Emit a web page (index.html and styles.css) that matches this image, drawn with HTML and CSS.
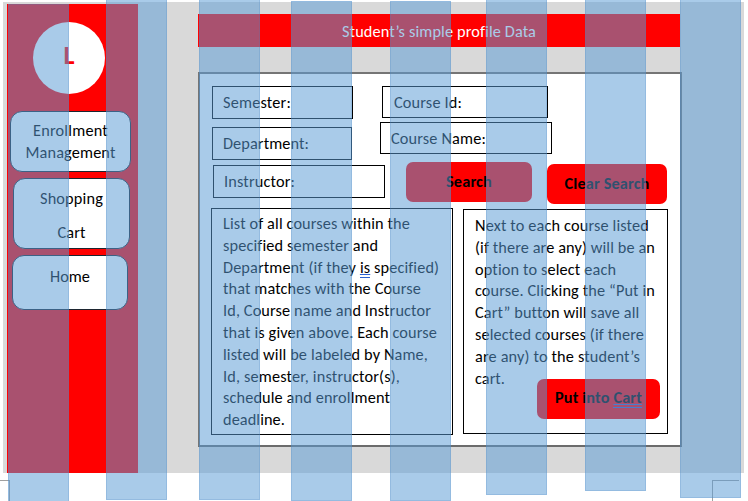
FILE: index.html
```html
<!DOCTYPE html>
<html lang="en">
<head>
<meta charset="utf-8">
<title>Student's simple profile Data</title>
<link rel="stylesheet" href="styles.css">
</head>
<body>
<div class="page">
  <div class="app">
    <nav class="sidebar">
      <div class="avatar"><span>L</span></div>
      <div class="nav-btn enroll"><span class="t" data-w="75">Enrollment</span><span class="t" data-w="90">Management</span></div>
      <div class="nav-btn shop"><span class="t" data-w="63">Shopping</span><span class="t" data-w="28">Cart</span></div>
      <div class="nav-btn home"><span class="t" data-w="40">Home</span></div>
    </nav>
    <main class="main">
      <header class="title"><span class="t" data-w="194">Student’s simple profile Data</span></header>
      <section class="panel">
        <div class="form">
          <div class="col-left">
            <div class="field semester"><span class="t" data-w="68">Semester:</span></div>
            <div class="field department"><span class="t" data-w="86">Department:</span></div>
            <div class="field instructor"><span class="t" data-w="71">Instructor:</span></div>
          </div>
          <div class="col-right">
            <div class="field course-id"><span class="t" data-w="68">Course Id:</span></div>
            <div class="field course-name"><span class="t" data-w="95">Course Name:</span></div>
            <div class="actions">
              <div class="btn search"><span class="t" data-w="46">Search</span></div>
              <div class="btn clear"><span class="t" data-w="85">Clear Search</span></div>
            </div>
          </div>
        </div>
        <div class="notes">
          <div class="note list">
            <span class="t" data-w="187">List of all courses within the</span>
            <span class="t" data-w="155">specified semester and</span>
            <span class="t" data-w="216">Department (if they <u>is</u> specified)</span>
            <span class="t" data-w="198">that matches with the Course</span>
            <span class="t" data-w="208">Id, Course name and Instructor</span>
            <span class="t" data-w="214">that is given above. Each course</span>
            <span class="t" data-w="205">listed will be labeled by Name,</span>
            <span class="t" data-w="177">Id, semester, instructor(s),</span>
            <span class="t" data-w="167">schedule and enrollment</span>
            <span class="t" data-w="62">deadline.</span>
          </div>
          <div class="note cart">
            <span class="t" data-w="174">Next to each course listed</span>
            <span class="t" data-w="180">(if there are any) will be an</span>
            <span class="t" data-w="141">option to select each</span>
            <span class="t" data-w="180">course. Clicking the “Put in</span>
            <span class="t" data-w="164">Cart” button will save all</span>
            <span class="t" data-w="169">selected courses (if there</span>
            <span class="t" data-w="165">are any) to the student’s</span>
            <span class="t" data-w="30">cart.</span>
            <div class="btn put"><span class="t" data-w="87">Put into <u>Cart</u></span></div>
          </div>
        </div>
      </section>
    </main>
  </div>
  <div class="corner corner-left"></div>
  <div class="corner corner-right"></div>
  <div class="stripe s1"></div>
  <div class="stripe s2"></div>
  <div class="stripe s3"></div>
  <div class="stripe s4"></div>
  <div class="stripe s5"></div>
  <div class="stripe s6"></div>
  <div class="stripe s7"></div>
  <div class="stripe s8"></div>
</div>
<script src="fit.js"></script>
</body>
</html>
```
FILE: styles.css
```css
* { box-sizing: border-box; }
body { margin: 0; background: #fff; color: #000; font: 16.3px/22px Carlito, Calibri, Lato, sans-serif; }
.page { position: relative; width: 748px; height: 501px; overflow: hidden; padding: 2px 0 0 3px; }
.app { display: flex; width: 741px; height: 471px; background: #d9d9d9; padding: 2px 0 0 4px; }
.t { display: block; width: max-content; white-space: pre; }

.sidebar { width: 131px; height: 469px; background: #f00; padding-top: 18px; }
.avatar { width: 72px; height: 72px; margin-left: 26px; border-radius: 50%; background: #fff; color: #f00; font: bold 26px/67px Carlito, Calibri, Lato, sans-serif; text-align: center; }
.nav-btn { display: flex; flex-direction: column; align-items: center; background: #fff; border: 1px solid #1c2530; border-radius: 12px; }
.enroll { width: 121px; height: 61px; margin: 17px 0 0 3px; padding-top: 7px; }
.shop { width: 117px; height: 71px; margin: 6px 0 0 6px; padding-top: 8px; gap: 12px; }
.home { width: 116px; height: 55px; margin: 6px 0 0 5px; padding-top: 9px; }

.main { margin-left: 60px; padding-top: 10px; }
.title { display: flex; justify-content: center; width: 482px; height: 33px; background: #f00; color: #fff; padding-top: 6px; }
.panel { width: 484px; height: 375px; margin-top: 25px; background: #fff; border: 2px solid #757575; border-bottom-color: #6b6b6b; }
.form { display: flex; height: 134px; padding: 12px 0 0 12px; }
.col-left { width: 168px; }
.field { border: 1px solid #000; padding: 4px 0 0 10px; white-space: nowrap; }
.semester { width: 141px; height: 33px; }
.department { width: 140px; height: 33px; margin-top: 8px; }
.instructor { width: 172px; height: 33px; margin: 5px 0 0 1px; }
.course-id { width: 166px; height: 32px; margin-left: 2px; padding-left: 11px; }
.course-name { width: 172px; height: 32px; margin-top: 4px; }
.actions { display: flex; gap: 15px; margin: 8px 0 0 26px; }
.btn { display: flex; justify-content: center; background: #f00; border-radius: 7px; font-weight: bold; padding-top: 8px; }
.search { width: 126px; height: 40px; }
.clear { width: 120px; height: 40px; margin-top: 2px; }

.notes { display: flex; gap: 10px; padding-left: 11px; }
.note { border: 1px solid #000; line-height: 21.8px; padding-left: 11px; }
.list { width: 242px; height: 227px; padding-top: 4px; }
.cart { width: 205px; height: 225px; margin-top: 1px; padding-top: 5px; position: relative; }
.put { position: absolute; left: 73px; top: 169px; width: 123px; height: 40px; }
u { text-decoration: underline #2d62d0 1px; text-underline-offset: 1px; text-decoration-skip-ink: none; border-bottom: 1px solid #2d62d0; }

.corner { position: absolute; top: 480px; height: 21px; border-top: 1px solid #a0a0a0; }
.corner-left { left: 0; width: 10px; border-right: 1px solid #a0a0a0; }
.corner-right { left: 712px; width: 27px; border-left: 1px solid #a0a0a0; }
.stripe { position: absolute; width: 61px; background: rgba(91, 155, 213, .52); border: 1px solid rgba(65, 125, 190, .2); }
.s1 { left: 8px; top: 4px; height: 500px; }
.s2 { left: 106px; top: -1px; height: 501px; }
.s3 { left: 199px; top: -1px; height: 501px; }
.s4 { left: 291px; top: 1px; height: 500px; }
.s5 { left: 390px; top: 1px; height: 500px; }
.s6 { left: 486px; top: -1px; height: 496px; }
.s7 { left: 585px; top: -1px; height: 492px; }
.s8 { left: 680px; top: -1px; height: 499px; }
```
FILE: fit.js
```js
document.querySelectorAll('.t').forEach(function (line) {
  var gap = Number(line.dataset.w) - line.getBoundingClientRect().width;
  line.style.letterSpacing = (gap / line.textContent.length) + 'px';
});
```
